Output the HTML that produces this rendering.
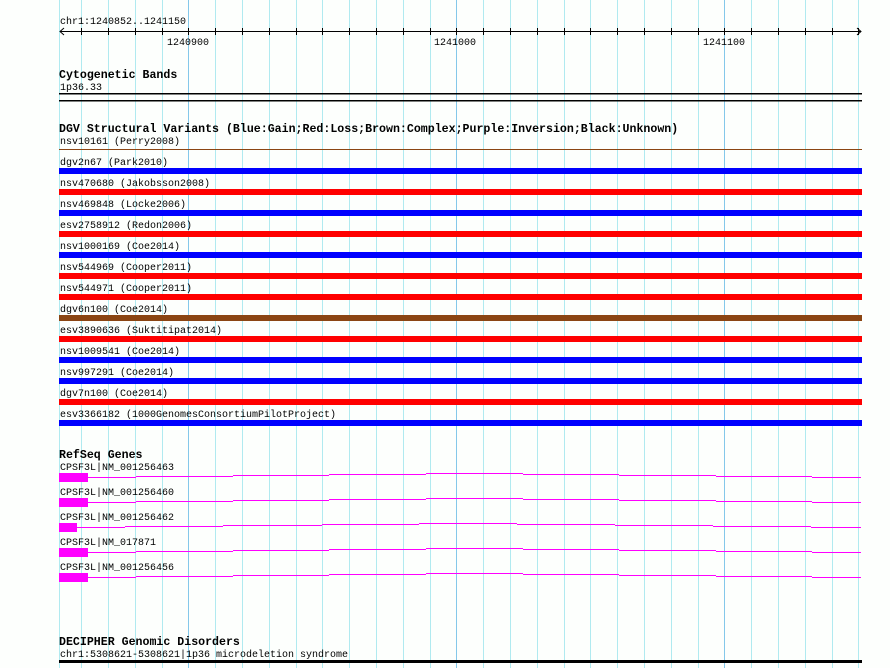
<!DOCTYPE html>
<html><head><meta charset="utf-8"><style>
html,body{margin:0;padding:0;background:#fdfffd;}
svg{display:block}
text{font-family:"Liberation Mono","DejaVu Sans Mono",monospace;font-size:10px;fill:#000}
.b{font-weight:bold;font-size:11.6px}
</style></head><body>
<svg id="s" width="890" height="668" xmlns="http://www.w3.org/2000/svg">
<g id="grid"></g>
<g id="fg">
<text x="60" y="24">chr1:1240852..1241150</text>
<line x1="60" y1="31.5" x2="861" y2="31.5" stroke="#000"/>
<polyline points="64,28 60,31.5 64,35" fill="none" stroke="#000"/>
<polyline points="857,28 861,31.5 857,35" fill="none" stroke="#000"/>
<text x="188" y="45" text-anchor="middle">1240900</text>
<text x="455" y="45" text-anchor="middle">1241000</text>
<text x="724" y="45" text-anchor="middle">1241100</text>
<text class="b" x="59" y="78">Cytogenetic Bands</text>
<text x="60" y="90">1p36.33</text>
<rect x="59" y="93" width="803" height="1.5" fill="#000"/>
<rect x="59" y="100" width="803" height="1.5" fill="#000"/>
<text class="b" x="59" y="132">DGV Structural Variants (Blue:Gain;Red:Loss;Brown:Complex;Purple:Inversion;Black:Unknown)</text>
<text x="60" y="144">nsv10161 (Perry2008)</text>
<rect x="59" y="149" width="803" height="1" fill="#8b4513"/>
<text class="b" x="59" y="458">RefSeq Genes</text>
<text class="b" x="59" y="645">DECIPHER Genomic Disorders</text>
<text x="60" y="657">chr1:5308621-5308621|1p36 microdeletion syndrome</text>
<rect x="59" y="660" width="803" height="3" fill="#000"/>
</g>
</svg>
<script>
var ns="http://www.w3.org/2000/svg";
function el(p,t,a,txt){var e=document.createElementNS(ns,t);for(var k in a)e.setAttribute(k,a[k]);if(txt)e.textContent=txt;p.appendChild(e);return e;}
var g=document.getElementById('grid'),fg=document.getElementById('fg');
el(g,'line',{x1:59.5,y1:0,x2:59.5,y2:668,stroke:'#b0eaf0'});
for(var k=-4;k<=25;k++){var x=Math.round(188.3+26.8*k)+0.5;var major=(k%10===0);
el(g,'line',{x1:x,y1:0,x2:x,y2:668,stroke:major?'#84c8ea':'#b0eaf0'});
if(x<862)el(fg,'line',{x1:x,y1:28,x2:x,y2:35,stroke:'#000'});}
var dgv=[["dgv2n67 (Park2010)","#0000ff"],["nsv470680 (Jakobsson2008)","#ff0000"],["nsv469848 (Locke2006)","#0000ff"],["esv2758912 (Redon2006)","#ff0000"],["nsv1000169 (Coe2014)","#0000ff"],["nsv544969 (Cooper2011)","#ff0000"],["nsv544971 (Cooper2011)","#ff0000"],["dgv6n100 (Coe2014)","#8b4513"],["esv3890636 (Suktitipat2014)","#ff0000"],["nsv1009541 (Coe2014)","#0000ff"],["nsv997291 (Coe2014)","#0000ff"],["dgv7n100 (Coe2014)","#ff0000"],["esv3366182 (1000GenomesConsortiumPilotProject)","#0000ff"]];
dgv.forEach(function(d,i){var y=168+21*i;el(fg,'text',{x:60,y:y-3},d[0]);el(fg,'rect',{x:59,y:y,width:803,height:6,fill:d[1]});});
var genes=["CPSF3L|NM_001256463","CPSF3L|NM_001256460","CPSF3L|NM_001256462","CPSF3L|NM_017871","CPSF3L|NM_001256456"];
var bpA=[88,136,233,329,426,523,619,716,812,861],bpB=[77,125,223,322,419,517,615,713,811,861];
var lv=[0,-1,-2,-3,-4,-3,-2,-1,0];
genes.forEach(function(n,i){var base=477+25*i;el(fg,'text',{x:60,y:base-7},n);
var bp=i===2?bpB:bpA;el(fg,'rect',{x:59,y:base-4,width:bp[0]-59,height:9,fill:'#ff00ff'});
for(var j=0;j<9;j++){var y=base+lv[j]+0.5;el(fg,'line',{x1:bp[j],y1:y,x2:bp[j+1],y2:y,stroke:'#ff00ff'});}});
</script>
</body></html>
